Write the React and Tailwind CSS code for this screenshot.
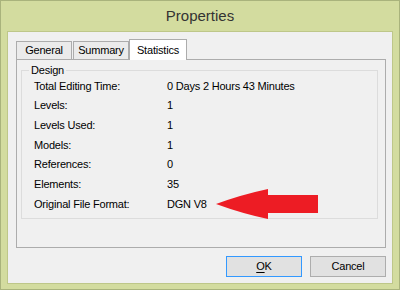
import React from "react";

const rows = [
  ["Total Editing Time:", "0 Days 2 Hours 43 Minutes"],
  ["Levels:", "1"],
  ["Levels Used:", "1"],
  ["Models:", "1"],
  ["References:", "0"],
  ["Elements:", "35"],
  ["Original File Format:", "DGN V8"],
];

const App = () => {
  return (
    <div
      className="relative w-[400px] h-[290px] bg-[#d3dc9f] border border-[#a9b37c] flex flex-col px-[6px] pb-[5px] text-[11px] tracking-[-0.2px] text-black"
      style={{ fontFamily: '"Liberation Sans", Arial, sans-serif' }}
    >
      {/* Title bar */}
      <div className="h-[30px] flex items-center justify-center text-[15px] tracking-normal text-[#333]">
        Properties
      </div>

      {/* Client area */}
      <div className="flex-1 bg-[#f0f0f0] border border-[#bec789] flex flex-col pt-[7px] pl-[8px] pr-[6px]">
        {/* Tabs */}
        <div className="flex items-end h-[20px]">
          <div className="w-[56px] h-[18px] flex items-center justify-center bg-[#ebebeb] border border-b-0 border-[#acacac]">
            General
          </div>
          <div className="ml-[1px] w-[56px] h-[18px] flex items-center justify-center bg-[#ebebeb] border border-b-0 border-[#acacac]">
            Summary
          </div>
          <div className="w-[58px] h-[21px] -mb-px relative z-10 flex items-center justify-center bg-white border border-b-0 border-[#acacac]">
            Statistics
          </div>
        </div>

        {/* Tab page */}
        <div className="w-[370px] h-[189px] border border-[#acacac] bg-[#f0f0f0] pl-[4px] pt-[10px]">
          <div className="relative w-[357px] h-[149px] border border-[#dcdcdc] pl-[12px] pt-[5px]">
            <span className="absolute left-[7px] -top-[8px] px-[2px] bg-[#f0f0f0] leading-[14px]">
              Design
            </span>
            {rows.map(([label, value], i) => (
              <div key={i} className="flex items-center h-[19.7px]">
                <div className="w-[133px]">{label}</div>
                <div>{value}</div>
              </div>
            ))}
          </div>
        </div>

        {/* Buttons */}
        <div className="flex justify-end gap-[8px] mt-[8px] w-[370px]">
          <button className="w-[76px] h-[21px] bg-[#e1e1e1] border border-[#3399ff]">
            <span className="underline underline-offset-2">O</span>K
          </button>
          <button className="w-[76px] h-[21px] bg-[#e1e1e1] border border-[#adadad]">
            Cancel
          </button>
        </div>
      </div>

      {/* Red annotation arrow */}
      <svg
        className="absolute left-[215px] top-[188px]"
        width="103"
        height="31"
        viewBox="0 0 103 31"
      >
        <path
          d="M0 15 Q26 5.5 52 0 L52 6 L102 6 L102 24 L52 24 L52 30 Q26 24.5 0 15 Z"
          fill="#ed1c24"
        />
      </svg>
    </div>
  );
};

export default App;
